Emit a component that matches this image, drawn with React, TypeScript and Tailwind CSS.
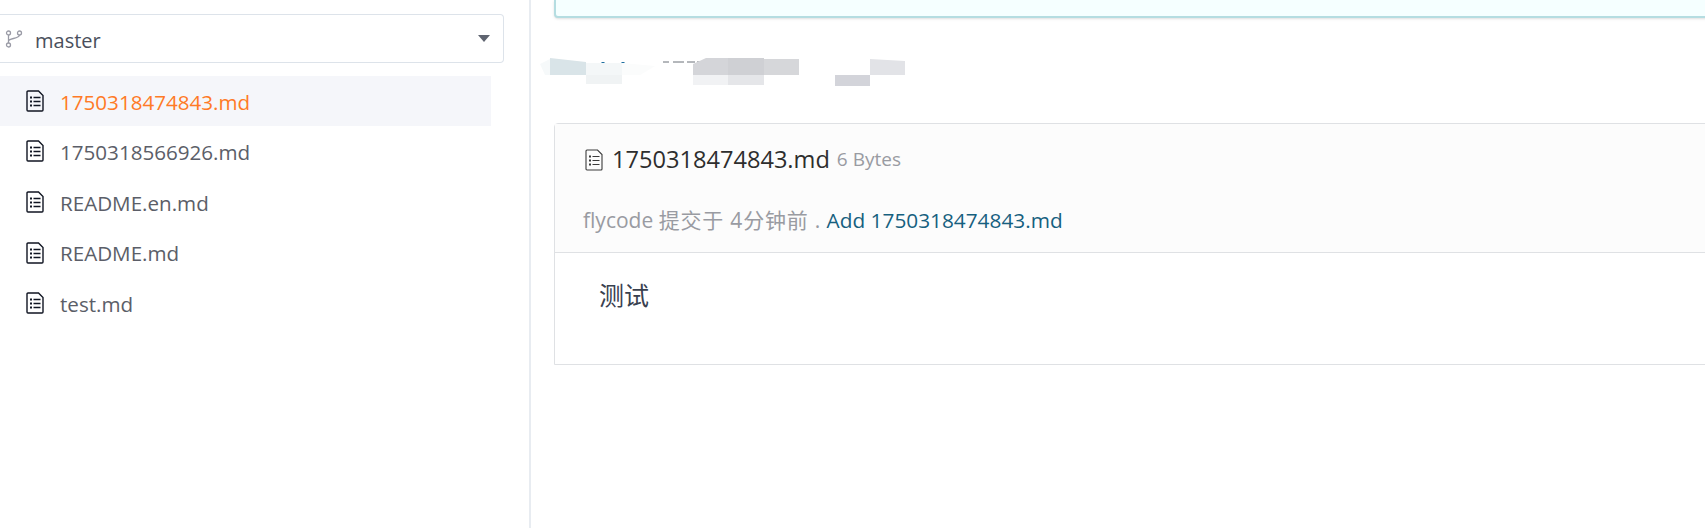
import React from "react";

const font = "font-['Open_Sans','Noto_Sans_CJK_SC',sans-serif]";

const FileIcon: React.FC<{ className?: string; sw?: number }> = ({ className, sw = 1.4 }) => (
  <svg viewBox="0 0 18 22" fill="none" className={className}>
    <path
      d="M1 2a1 1 0 0 1 1-1h10.500L17 5.500V20a1 1 0 0 1-1 1H2a1 1 0 0 1-1-1z"
      stroke="currentColor"
      strokeWidth={sw}
    />
    <rect x="4" y="6.500" width="2" height="2" fill="currentColor" />
    <rect x="4" y="10.500" width="2" height="2" fill="currentColor" />
    <rect x="4" y="14.500" width="2" height="2" fill="currentColor" />
    <path d="M7.500 7.500h7M7.500 11.500h7M7.500 15.500h7" stroke="currentColor" strokeWidth={sw} />
  </svg>
);

const BranchIcon: React.FC = () => (
  <svg viewBox="0 0 18 18" fill="none" stroke="#9a9ba6" strokeWidth="1.300" className="h-[18px] w-[18px]">
    <circle cx="3.500" cy="3" r="2" />
    <circle cx="3.500" cy="15" r="2" />
    <circle cx="14.500" cy="3" r="2" />
    <path d="M3.500 5v8M14.500 5c0 4-11 3-11 6" />
  </svg>
);

// pixelated part of the screenshot
const Mosaic: React.FC = () => (
  <svg viewBox="0 0 400 40" className="block h-[40px] w-[400px]">
    <path d="M10 4 46 8V21H10Z" fill="#d9e4e8" />
    <path d="M0 10 10 5V21H5Z" fill="#f6f9fa" />
    <rect x="46" y="9" width="36" height="12" fill="#f4f7f8" />
    <rect x="46" y="21" width="36" height="9" fill="#f0f3f4" />
    <path d="M82 9 115 12 100 21H82Z" fill="#fbfcfc" />
    <path d="M63 8v1M83 8v1" stroke="#1f6f9f" strokeWidth="3" />
    <path d="M123 8h6M133 8h11M147 8h8M157 8h6" stroke="#6b7078" strokeWidth="1" />
    <path d="M153 10 166 4H188V21H153Z" fill="#d4d5d9" />
    <rect x="188" y="4" width="36" height="17" fill="#cfd0d4" />
    <rect x="224" y="5" width="35" height="16" fill="#d6d7da" />
    <rect x="153" y="21" width="35" height="10" fill="#f1f2f4" />
    <rect x="188" y="21" width="36" height="10" fill="#e5e6e9" />
    <rect x="295" y="21" width="35" height="11" fill="#d3d4da" />
    <path d="M330 5 365 7V21H330Z" fill="#e2e3e7" />
  </svg>
);

const files = [
  "1750318474843.md",
  "1750318566926.md",
  "README.en.md",
  "README.md",
  "test.md",
];

export default function App() {
  return (
    <div className={`flex h-[528px] w-[1705px] overflow-hidden bg-white ${font}`}>
      {/* 左侧文件列表 */}
      <div className="w-[531px] shrink-0 border-r-2 border-[#e8ecf1] pr-[26px] pt-[14px]">
        <div className="flex h-[49px] w-[504px] items-center justify-between rounded-r border border-l-0 border-[#dde3ea] pl-[5px] pr-[13px]">
          <div className="flex items-center gap-[12px]">
            <BranchIcon />
            <span className="relative top-[2px] text-[20px] text-[#4a4f5c]">master</span>
          </div>
          <div className="h-0 w-0 border-x-[6px] border-t-[7px] border-x-transparent border-t-[#5f6470]" />
        </div>
        <div className="mt-[13px] pr-[12px]">
          {files.map((name, i) => (
            <div
              key={name}
              className={`flex items-center gap-[16px] pl-[26px] text-[20.600px] ${
                i === 0 ? "h-[50px] bg-[#f5f6fa] text-[#ff7a26]" : "h-[50.700px] text-[#5b5e68]"
              }`}
            >
              <FileIcon className="h-[22px] w-[18px] text-[#101522]" />
              <span className="relative top-[1px]">{name}</span>
            </div>
          ))}
        </div>
      </div>

      {/* 右侧内容 */}
      <div className="min-w-0 flex-1 pl-[23px]">
        <div className="h-[18px] w-[1300px] rounded-b border-2 border-t-0 border-[#b5dde1] bg-[#f5ffff] shadow-sm" />
        <div className="-ml-[14px] mt-[36px] h-[69px]">
          <Mosaic />
        </div>
        <div className="w-[1300px] rounded-t border border-[#dfe1e4]">
          <div className="h-[129px] border-b border-[#dfe1e4] bg-[#fcfcfc] pl-[30px]">
            <div className="flex h-[71px] items-center">
              <FileIcon className="h-[22px] w-[18px] text-[#3a3a3a]" sw={1.1} />
              <span className="ml-[9px] text-[23.600px] text-[#2e2e2e]">1750318474843.md</span>
              <span className="ml-[7px] text-[19px] text-[#999ba2]">6 Bytes</span>
            </div>
            <div className="-ml-[2px] mt-[10px] text-[21px] text-[#999ba2]">
              flycode <span className="tracking-[0.800px]">提交于 4分钟前 .</span>{" "}
              <span className="text-[20.800px] text-[#16607f]">Add 1750318474843.md</span>
            </div>
          </div>
          <div className="h-[111px] pl-[44px] pt-[24px] text-[25px] text-[#39414f]">测试</div>
        </div>
      </div>
    </div>
  );
}
